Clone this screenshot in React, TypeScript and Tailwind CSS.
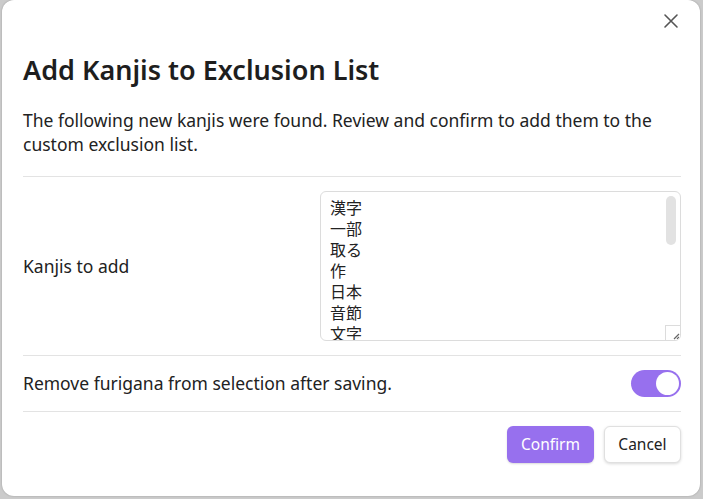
import React from "react";

const font = { fontFamily: '"Noto Sans", "Noto Sans CJK JP", sans-serif' };

export default function App() {
  const kanjis = ["漢字", "一部", "取る", "作", "日本", "音節", "文字", "記号", "読み"];
  return (
    <div className="w-[703px] h-[499px] bg-[#cbcbcb] overflow-hidden pl-[2px] pr-[3px] pb-[3px] text-[#222222]" style={font}>
      <div className="relative h-full bg-white rounded-[12px] shadow-[0_0_2px_rgba(0,0,0,0.25)] pl-[21px] pr-[19px] flex flex-col">
        <button className="absolute right-[18px] top-[10px] w-[22px] h-[22px] flex items-center justify-center text-[#555]">
          <svg width="16" height="16" viewBox="0 0 16 16" fill="none" stroke="currentColor" strokeWidth="1.6" strokeLinecap="round">
            <path d="M2 2 L14 14 M14 2 L2 14" />
          </svg>
        </button>
        <h1 className="mt-[52px] text-[27px] leading-[36px] font-semibold text-[#1e1e1e]">Add Kanjis to Exclusion List</h1>
        <p className="mt-[20px] text-[17.5px] leading-[24px] text-[#222]">
          The following new kanjis were found. Review and confirm to add them to the custom exclusion list.
        </p>
        <div className="mt-[20px] border-t border-[#e3e3e3] flex items-center justify-between py-[14px]">
          <div className="text-[17.5px]">Kanjis to add</div>
          <div className="relative w-[361px] h-[150px] border border-[#dcdcdc] rounded-[6px] overflow-hidden">
            <textarea
              readOnly
              value={kanjis.join("\n")}
              className="w-full h-full resize-none overflow-hidden pl-[9px] pt-[6px] text-[16px] leading-[21px] outline-none text-[#222]"
              style={font}
            />
            <div className="absolute right-[4px] top-[4px] w-[10px] h-[49px] rounded-full bg-[#e2e2e2]" />
            <div className="absolute right-0 bottom-0 w-[15px] h-[15px] border-l border-t border-[#dcdcdc] bg-white flex items-end justify-end">
              <svg width="8" height="8" viewBox="0 0 8 8" stroke="#666" strokeWidth="1.2">
                <path d="M7 2 L2 7 M7 5 L5 7" />
              </svg>
            </div>
          </div>
        </div>
        <div className="border-t border-[#e3e3e3] flex items-center justify-between py-[14px]">
          <div className="text-[17.5px]">Remove furigana from selection after saving.</div>
          <div className="w-[50px] h-[27px] rounded-full bg-[#9770ee] flex items-center justify-end pr-[2px]">
            <div className="w-[23px] h-[23px] rounded-full bg-white" />
          </div>
        </div>
        <div className="border-t border-[#e3e3e3] flex justify-end gap-[10px] pt-[14px]">
          <button className="w-[87px] h-[37px] rounded-[6px] bg-[#9770ee] text-white text-[15.5px] shadow-[0_1px_2px_rgba(0,0,0,0.15)]">Confirm</button>
          <button className="w-[77px] h-[37px] rounded-[6px] bg-white text-[#222] text-[15.5px] border border-[#e0e0e0] shadow-[0_1px_3px_rgba(0,0,0,0.15)]">Cancel</button>
        </div>
      </div>
    </div>
  );
}
